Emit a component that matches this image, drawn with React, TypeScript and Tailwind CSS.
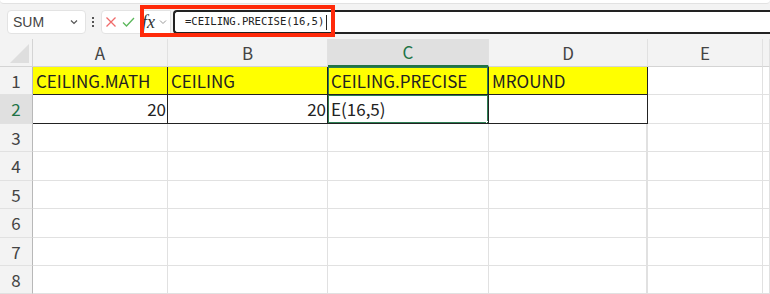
import React from "react";

const cols = [
  { key: "A", w: "w-[135px]" },
  { key: "B", w: "w-[160px]" },
  { key: "C", w: "w-[161px]" },
  { key: "D", w: "w-[159px]" },
  { key: "E", w: "w-[115px]" },
  { key: "F", w: "w-[7px]" },
];

const rowHeights = ["h-[28px]", "h-[29px]", "h-[28px]", "h-[29px]", "h-[28px]", "h-[29px]", "h-[28px]", "h-[28px]"];

const font = "font-['Noto_Sans_CJK_JP','Noto_Sans',sans-serif]";

function cellClass(r: number, c: number) {
  // r = 1-based row, c = 0-based col index
  const inTable = r <= 2 && c <= 3;
  let cls = "border-r border-b ";
  if (inTable) cls += "border-r-[#222] border-b-[#222] ";
  else cls += "border-r-[#e1e1e1] border-b-[#e1e1e1] ";
  if (c === 3 && r > 2) cls += "border-r-2 ";
  if (r === 1 && c <= 3) cls += "bg-[#ffff00] ";
  else cls += "bg-white ";
  return cls;
}

export default function App() {
  const data: Record<string, string> = {
    "1-0": "CEILING.MATH",
    "1-1": "CEILING",
    "1-2": "CEILING.PRECISE",
    "1-3": "MROUND",
    "2-0": "20",
    "2-1": "20",
    "2-2": "E(16,5)",
  };
  return (
    <div className={`w-[770px] h-[294px] overflow-hidden bg-[#f3f3f3] ${font}`}>
      {/* ribbon edge */}
      <div className="h-[4px] bg-white rounded-b-[6px] border-b border-[#e2e2e2]" />

      {/* formula bar */}
      <div className="relative flex items-center h-[26px] mt-[5px]">
        <div className="ml-[7px] w-[79px] h-[24px] bg-white rounded-[4px] border border-[#e3e3e3] flex items-center justify-between px-[5px]">
          <span className="text-[14px] text-[#444] font-['Liberation_Sans',sans-serif]">SUM</span>
          <svg width="10" height="10" viewBox="0 0 10 10" className="mr-[1px]">
            <path d="M2 3.5 L5 6.5 L8 3.5" stroke="#555" strokeWidth="1.2" fill="none" />
          </svg>
        </div>
        <div className="ml-[6px] flex flex-col gap-[2px]">
          <span className="w-[2px] h-[2px] bg-[#555]" />
          <span className="w-[2px] h-[2px] bg-[#555]" />
          <span className="w-[2px] h-[2px] bg-[#555]" />
        </div>
        <div className="ml-[7px] w-[70px] h-[24px] bg-white rounded-l-[4px] border border-[#e3e3e3] flex items-center">
          <svg width="12" height="12" viewBox="0 0 12 12" className="ml-[3px]">
            <path d="M1.5 1.5 L10.5 10.5 M10.5 1.5 L1.5 10.5" stroke="#f06a6a" strokeWidth="1.3" />
          </svg>
          <svg width="13" height="12" viewBox="0 0 13 12" className="ml-[5px]">
            <path d="M1 6.5 L4.5 10 L12 2" stroke="#5cb85c" strokeWidth="1.3" fill="none" />
          </svg>
          <span className="ml-[7px] text-[18px] italic text-[#333] font-['Liberation_Serif',serif] leading-none">
            fx
          </span>
          <svg width="10" height="10" viewBox="0 0 10 10" className="ml-[3px]">
            <path d="M2 3.5 L5 6.5 L8 3.5" stroke="#999" strokeWidth="1" fill="none" />
          </svg>
        </div>
        <div className="ml-[2px] flex-1 h-[24px] bg-white border-y-2 border-l-2 border-[#222] rounded-l-[4px] flex items-center pl-[10px]">
          <span className="text-[10.6px] text-[#222] font-['DejaVu_Sans_Mono',monospace] tracking-[-0.05px]">
            =CEILING.PRECISE(16,5)
          </span>
          <span className="ml-[2px] w-[1px] h-[15px] bg-[#222]" />
        </div>
        {/* red highlight */}
        <div className="absolute left-[140px] top-[-4px] w-[195px] h-[32px] border-[4px] border-[#ff2a0a]" />
      </div>

      {/* sheet */}
      <div className="mt-[4px] bg-white">
        {/* column header */}
        <div className="flex h-[28px] bg-[#f3f3f3]">
          <div className="w-[33px] border-r border-b border-[#d4d4d4] relative overflow-hidden">
            <svg width="33" height="28" viewBox="0 0 33 28" className="absolute inset-0">
              <path d="M29 5 L29 24 L10 24 Z" fill="#dedede" />
            </svg>
          </div>
          {cols.map((c) => (
            <div
              key={c.key}
              className={`${c.w} flex items-center justify-center text-[17px] border-r border-[#e1e1e1] ${
                c.key === "C"
                  ? "bg-[#e0e0e0] text-[#217346] border-b-2 border-b-[#217346]"
                  : "text-[#444] border-b border-b-[#d4d4d4]"
              }`}
            >
              {c.key === "F" ? "" : c.key}
            </div>
          ))}
        </div>

        {/* rows */}
        {rowHeights.map((h, i) => {
          const r = i + 1;
          return (
            <div key={r} className={`flex ${h}`}>
              <div
                className={`w-[33px] shrink-0 flex items-center justify-center text-[17px] border-r border-r-[#b8b8b8] border-b border-b-[#e1e1e1] ${
                  r === 2 ? "bg-[#e0e0e0] text-[#217346]" : "bg-[#f3f3f3] text-[#444]"
                }`}
              >
                {r}
              </div>
              {cols.map((c, ci) => {
                const v = data[`${r}-${ci}`];
                const right = r === 2 && ci <= 1;
                return (
                  <div
                    key={c.key}
                    className={`${c.w} shrink-0 relative flex items-center text-[17px] text-[#222] overflow-hidden whitespace-nowrap ${cellClass(r, ci)} ${
                      right ? "justify-end pr-[1px]" : "pl-[3px]"
                    }`}
                  >
                    {v}
                    {r === 1 && ci === 2 && (
                      <div className="absolute left-[-1px] top-[-1px] right-[-1px] bottom-[-1px] border-x-2 border-t-2 border-[#2d7f53]" />
                    )}
                    {r === 2 && ci === 2 && (
                      <div className="absolute left-[-1px] top-[-1px] right-[-1px] bottom-[-1px] border-2 border-[#2d7f53]" />
                    )}
                    {r === 2 && ci === 2 && (
                      <div className="absolute right-[-3px] bottom-[-3px] w-[5px] h-[5px] bg-[#2d7f53] border border-white" />
                    )}
                  </div>
                );
              })}
            </div>
          );
        })}
      </div>
    </div>
  );
}
